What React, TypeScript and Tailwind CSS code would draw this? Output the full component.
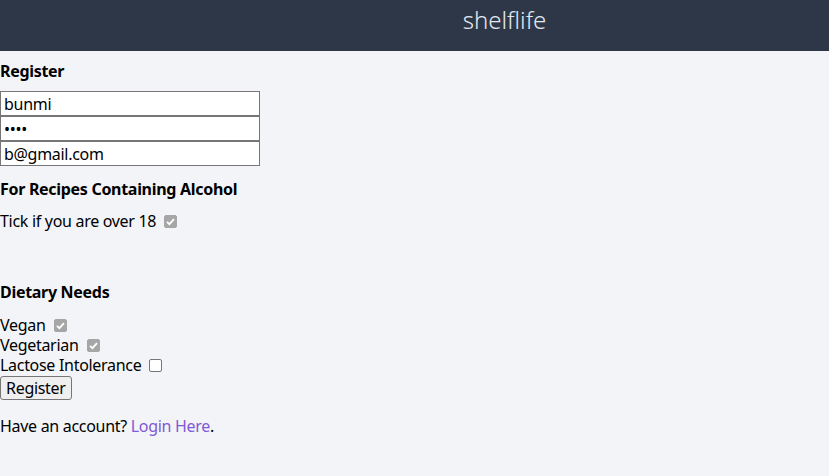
function Tick({ checked }: { checked?: boolean }) {
  return (
    <span className="relative ml-[8px] inline-flex h-[13px] w-[13px]">
      <input
        type="checkbox"
        defaultChecked={checked}
        className="peer h-[13px] w-[13px] appearance-none rounded-[2px] border border-[#767676] bg-white checked:border-[#a6a6a6] checked:bg-[#a6a6a6]"
      />
      {checked && (
        <svg
          viewBox="0 0 13 13"
          className="pointer-events-none absolute inset-0 h-[13px] w-[13px]"
          fill="none"
          stroke="white"
          strokeWidth="1.8"
        >
          <path d="M3 6.8 L5.4 9.2 L10 4.2" />
        </svg>
      )}
    </span>
  );
}

export default function App() {
  return (
    <div className="min-h-screen bg-[#f3f4f7] text-black font-['Noto_Sans',sans-serif] tracking-[-0.3px]">
      <header className="flex h-[51px] items-center justify-center bg-[#2d3748] pb-[12px] pl-[180px]">
        <h1 className="text-[24px] font-light tracking-normal text-[#e2e8f0]">shelflife</h1>
      </header>

      <form className="flex flex-col">
        <h3 className="mt-[8px] text-[16px] leading-[24px] font-bold">Register</h3>

        <div className="mt-[8px] flex flex-col">
          <input
            type="text"
            defaultValue="bunmi"
            className="h-[25px] w-[260px] border border-[#767676] bg-white px-[3px] text-[16px] leading-[20px]"
          />
          <input
            type="password"
            defaultValue="1234"
            className="h-[25px] w-[260px] border border-[#767676] bg-white px-[3px] text-[16px] leading-[20px]"
          />
          <input
            type="email"
            defaultValue="b@gmail.com"
            className="h-[25px] w-[260px] border border-[#767676] bg-white px-[3px] text-[16px] leading-[20px]"
          />
        </div>

        <h3 className="mt-[11px] text-[16px] leading-[24px] font-bold">
          For Recipes Containing Alcohol
        </h3>
        <label className="mt-[8px] flex items-center text-[16px] leading-[24px]">
          Tick if you are over 18
          <Tick checked />
        </label>

        <h3 className="mt-[47px] text-[16px] leading-[24px] font-bold">Dietary Needs</h3>
        <div className="mt-[11px] flex flex-col text-[16px] leading-[20px]">
          <label className="flex items-center">
            Vegan
            <Tick checked />
          </label>
          <label className="flex items-center">
            Vegetarian
            <Tick checked />
          </label>
          <label className="flex items-center">
            Lactose Intolerance
            <Tick />
          </label>
        </div>

        <div className="mt-[1px]">
          <button
            type="button"
            className="h-[24px] rounded-[3px] border border-[#767676] bg-[#efefef] px-[5px] text-[16px] leading-[20px]"
          >
            Register
          </button>
        </div>

        <p className="mt-[16px] text-[16px] leading-[20px]">
          Have an account? <a href="#" className="text-[#805ad5]">Login Here</a>.
        </p>
      </form>
    </div>
  );
}
